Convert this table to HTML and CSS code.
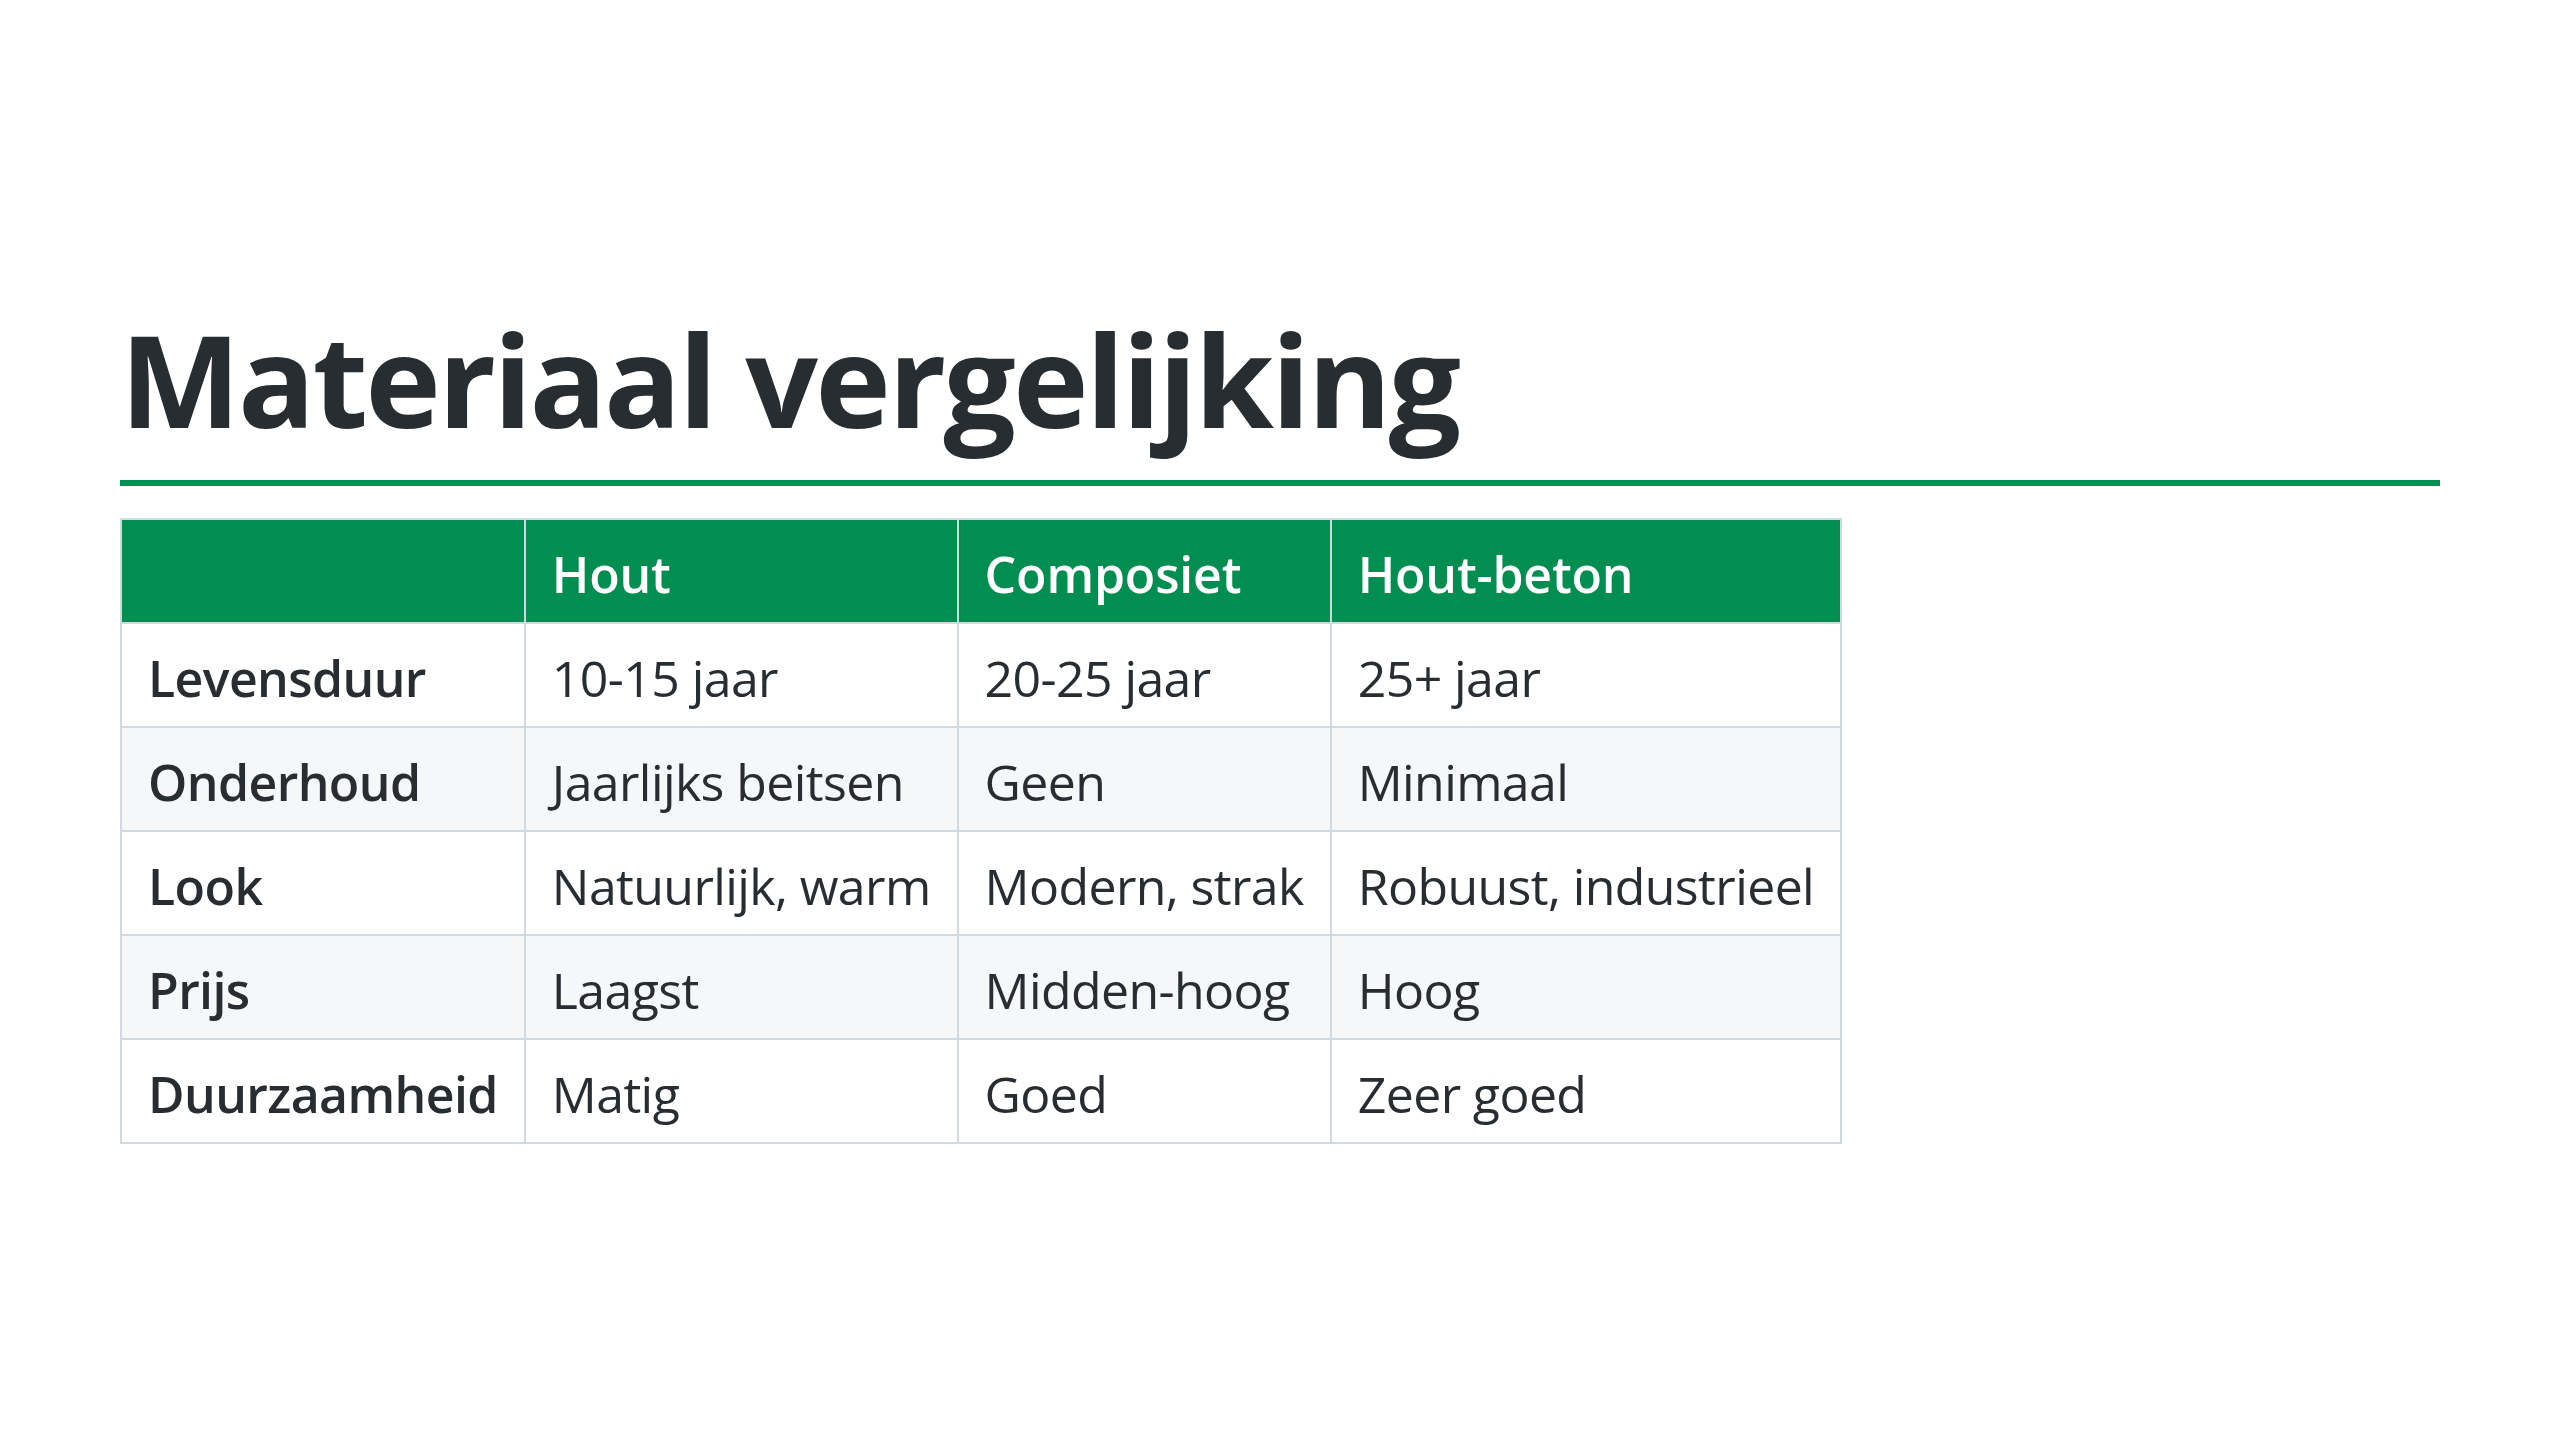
FILE: index.html
```html
<!DOCTYPE html>
<html lang="nl">
<head>
<meta charset="utf-8">
<title>Materiaal vergelijking</title>
<link rel="stylesheet" href="styles.css">
</head>
<body>
<main class="slide">
  <h1 class="title">Materiaal vergelijking</h1>
  <table class="compare">
    <thead>
      <tr>
        <th></th>
        <th>Hout</th>
        <th>Composiet</th>
        <th>Hout-beton</th>
      </tr>
    </thead>
    <tbody>
      <tr><td class="label">Levensduur</td><td>10-15 jaar</td><td>20-25 jaar</td><td>25+ jaar</td></tr>
      <tr><td class="label">Onderhoud</td><td>Jaarlijks beitsen</td><td>Geen</td><td>Minimaal</td></tr>
      <tr><td class="label">Look</td><td>Natuurlijk, warm</td><td>Modern, strak</td><td>Robuust, industrieel</td></tr>
      <tr><td class="label">Prijs</td><td>Laagst</td><td>Midden-hoog</td><td>Hoog</td></tr>
      <tr><td class="label">Duurzaamheid</td><td>Matig</td><td>Goed</td><td>Zeer goed</td></tr>
    </tbody>
  </table>
</main>
</body>
</html>
```

FILE: styles.css
```css
html, body {
  margin: 0;
  padding: 0;
  background: #ffffff;
}

body {
  font-family: "Segoe UI", "Open Sans", "Noto Sans", sans-serif;
  color: #282d32;
}

.slide {
  padding: 302px 120px 0;
}

.title {
  margin: 0;
  font-size: 128px;
  line-height: 1.2;
  font-weight: 700;
  letter-spacing: -2.8px;
  color: #282d32;
  padding-bottom: 24px;
  border-bottom: 6px solid #028d51;
}

.compare {
  margin-top: 32px;
  border-collapse: collapse;
  font-size: 50px;
  line-height: 70px;
  letter-spacing: -0.6px;
}

.compare th,
.compare td {
  border: 2px solid #d0d8e0;
  padding: 19px 26px 13px;
  text-align: left;
  white-space: nowrap;
}

.compare th {
  background: #028d51;
  color: #ffffff;
  font-weight: 600;
  letter-spacing: -0.2px;
}

.compare td {
  font-weight: 400;
}

.compare td.label {
  font-weight: 600;
}

.compare tbody tr:nth-child(even) td {
  background: #f6f7f9;
}
```
